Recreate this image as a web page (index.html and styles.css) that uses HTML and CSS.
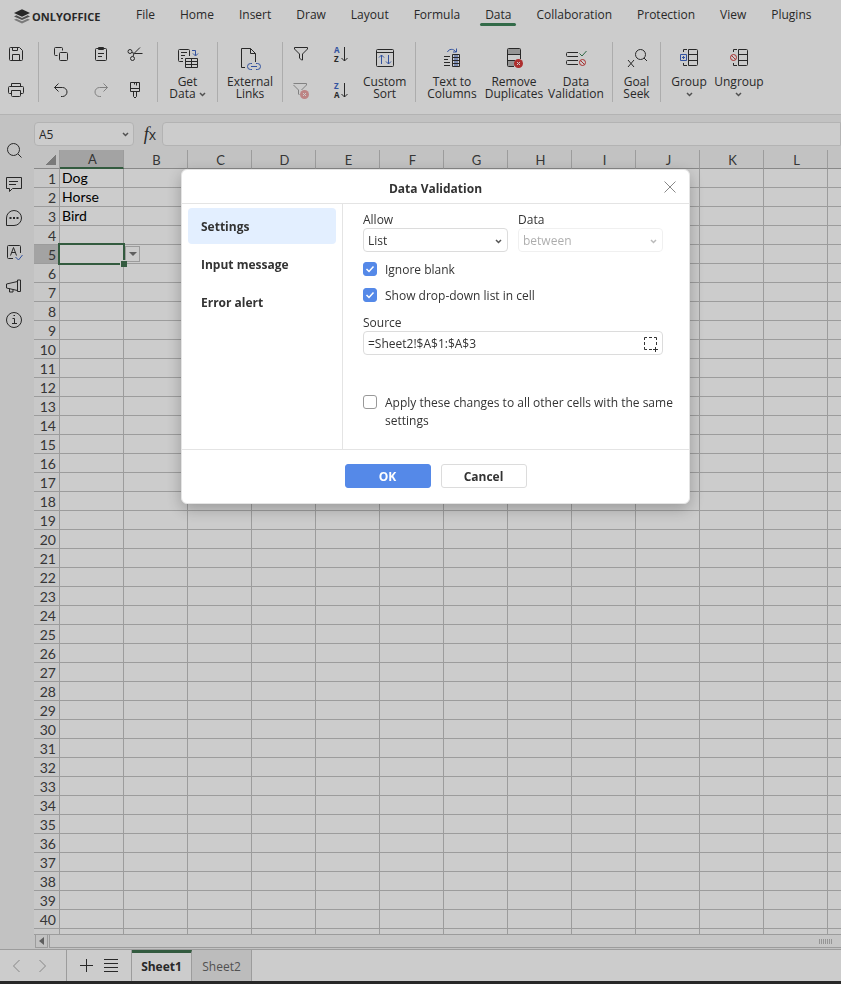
FILE: index.html
```html
<!DOCTYPE html>
<html lang="en">
<head>
    <meta charset="utf-8">
    <title>Spreadsheet Editor</title>
    <link rel="stylesheet" href="styles.css">
</head>
<body>
<div class="app">
    <header class="tabs-row">
        <a href="#" class="logo">
            <svg width="16" height="15" viewBox="0 0 16 15"><path d="M0 4 8 0.3 16 4 8 7.7z" fill="#333" stroke="none"/><path d="M0 7.4 2.4 6.3 8 8.9l5.6-2.6L16 7.4l-8 3.7z" fill="#666" stroke="none"/><path d="M0 10.8 2.4 9.7 8 12.3l5.6-2.6 2.4 1.1-8 3.7z" fill="#999" stroke="none"/></svg>
            ONLYOFFICE
        </a>
        <nav class="tabs">
            <a href="#">File</a>
            <a href="#">Home</a>
            <a href="#">Insert</a>
            <a href="#">Draw</a>
            <a href="#">Layout</a>
            <a href="#">Formula</a>
            <a href="#" class="active">Data</a>
            <a href="#">Collaboration</a>
            <a href="#">Protection</a>
            <a href="#">View</a>
            <a href="#">Plugins</a>
        </nav>
    </header>

    <div class="toolbar">
        <div class="group group-file">
            <button class="tool" aria-label="Save"><svg width="20" height="20" viewBox="0 0 20 20"><path d="M3.5 4.5a1 1 0 0 1 1-1h9l3 3v9a1 1 0 0 1-1 1h-11a1 1 0 0 1-1-1zM6.5 3.5v3h5v-3M6.500 16.500v-6h7v6"/></svg></button>
            <button class="tool" aria-label="Print"><svg width="20" height="20" viewBox="0 0 20 20"><path d="M5.500 6.500v-3h9v3M5.500 13.500h-2a1 1 0 0 1-1-1v-5a1 1 0 0 1 1-1h13a1 1 0 0 1 1 1v5a1 1 0 0 1-1 1h-2M5.500 10.500h9v5a1 1 0 0 1-1 1h-7a1 1 0 0 1-1-1z"/></svg></button>
        </div>
        <div class="group group-edit">
            <button class="tool" aria-label="Copy"><svg width="20" height="20" viewBox="0 0 20 20"><path d="M6.500 11.500h-2a1 1 0 0 1-1-1v-6a1 1 0 0 1 1-1h6a1 1 0 0 1 1 1v2"/><rect x="8.500" y="8.500" width="8" height="8" rx="1"/></svg></button>
            <button class="tool" aria-label="Paste"><svg width="20" height="20" viewBox="0 0 20 20"><rect x="4.500" y="4.500" width="11" height="12" rx="1"/><path d="M7.500 3.500h5v2h-5zM7 9.500h6M7 12.500h4"/></svg></button>
            <button class="tool" aria-label="Cut"><svg width="20" height="20" viewBox="0 0 20 20"><circle cx="5" cy="7.500" r="2"/><circle cx="7.500" cy="14.500" r="2"/><path d="M7 8.500l2.500 1h8M8 12.500l1-3 6-6"/></svg></button>
            <button class="tool" aria-label="Undo"><svg width="20" height="20" viewBox="0 0 20 20"><path d="M7.500 3.500l-4 4 4 4M3.500 7.500h8a4.500 4.500 0 0 1 0 9h-1.500"/></svg></button>
            <button class="tool" aria-label="Redo" disabled><svg width="20" height="20" viewBox="0 0 20 20"><path d="M12.500 3.500l4 4-4 4M16.500 7.500h-8a4.500 4.500 0 0 0 0 9h1.500"/></svg></button>
            <button class="tool" aria-label="Copy style"><svg width="20" height="20" viewBox="0 0 20 20"><path d="M5.500 2.500h9v9h-9zM5.500 8.500h9M11.500 2.500v3M9.500 2.500v2M8.500 11.500v5l1.500 1.500 1.500-1.500v-5"/></svg></button>
        </div>
        <div class="group group-get">
            <button class="big">
                <svg width="28" height="28" viewBox="0 0 28 28"><path d="M9 17.500H5.500a1 1 0 0 1-1-1v-10a1 1 0 0 1 1-1h9a1 1 0 0 1 1 1V12M7 8.500h6M7 11.500h4M7 14.500h2M11.500 14.500h12v9h-12zM11.500 17.500h12M11.500 20.500h12M17.500 14.500v9"/><path class="blue" d="M18 6.500h3.500v5M19 9.500l2.500 2.500 2.500-2.500"/></svg>
                <span>Get<br>Data <svg class="chev" width="7" height="5" viewBox="0 0 7 5"><path d="M1 1l2.500 2.500L6 1"/></svg></span>
            </button>
        </div>
        <div class="group group-links">
            <button class="big">
                <svg width="28" height="28" viewBox="0 0 28 28"><path d="M9 23.500H5.500v-19h9l5 5V18M14.500 4.500v5h5"/><path class="blue" d="M16 25.500h-1.500a3 3 0 0 1 0-6H16M20 19.500h1.500a3 3 0 0 1 0 6H20M15 22.500h6"/></svg>
                <span>External<br>Links</span>
            </button>
        </div>
        <div class="group group-sort">
            <div class="sort-tools">
                <button class="tool" aria-label="Filter"><svg width="20" height="20" viewBox="0 0 20 20"><path d="M3.500 3.500h13v1.500l-5 5v6h-1l-2-2v-4l-5-5z"/></svg></button>
                <button class="tool" aria-label="Sort ascending"><svg width="20" height="20" viewBox="0 0 20 20"><text class="blue-text" x="3" y="9">A</text><text x="3" y="18">Z</text><path d="M13.500 3v14M10.500 14l3 3 3-3"/></svg></button>
                <button class="tool" aria-label="Clear filter" disabled><svg width="20" height="20" viewBox="0 0 20 20"><path d="M2.500 3.500h13v1.500l-5 5M2.500 5l5 5v4l1 1"/><circle class="red-fill" cx="13.500" cy="14.500" r="4.500"/><path class="white" d="M12 13l3 3M15 13l-3 3"/></svg></button>
                <button class="tool" aria-label="Sort descending"><svg width="20" height="20" viewBox="0 0 20 20"><text class="blue-text" x="3" y="9">Z</text><text x="3" y="18">A</text><path d="M13.500 3v14M10.500 14l3 3 3-3"/></svg></button>
            </div>
            <button class="big">
                <svg width="28" height="28" viewBox="0 0 28 28"><rect x="5.500" y="5.500" width="17" height="17" rx="1"/><path d="M5.500 8.500h17"/><path class="blue" d="M10.500 20v-9M8 13.500l2.500-2.500 2.500 2.500M17.500 11v9M15 17.500l2.500 2.500 2.500-2.500"/></svg>
                <span>Custom<br>Sort</span>
            </button>
        </div>
        <div class="group group-data">
            <button class="big">
                <svg width="28" height="28" viewBox="0 0 28 28"><path d="M6 12.500h6M6 15.500h4M6 18.500h6M6 21.500h6M14.500 10.500h7v12h-7zM14.500 13.500h7M14.500 16.500h7M14.500 19.500h7"/><path class="blue" d="M9.500 8c1-3 6-4 8.500 0M18.500 4.500v3.500H15M16 12h4M16 15h4M16 18h4M16 21h4"/></svg>
                <span>Text to<br>Columns</span>
            </button>
            <button class="big">
                <svg width="28" height="28" viewBox="0 0 28 28"><path fill="#bbb" stroke="none" d="M8 5h12v5H8zM8 17h12v5H8z"/><path d="M14 22.500H8.500a1 1 0 0 1-1-1v-16a1 1 0 0 1 1-1h11a1 1 0 0 1 1 1V15M7.500 10.500h13M7.500 16.500H15"/><circle class="red-fill" cx="18.500" cy="19.500" r="4.500"/><path class="white" d="M17 18l3 3M20 18l-3 3"/></svg>
                <span>Remove<br>Duplicates</span>
            </button>
            <button class="big">
                <svg width="28" height="28" viewBox="0 0 28 28"><path d="M16 8.500H5.500a1 1 0 0 0-1 1v2a1 1 0 0 0 1 1H16M16 16.500H5.500a1 1 0 0 0-1 1v2a1 1 0 0 0 1 1H16"/><path class="green" d="M17.500 9.500l2.500 2.500 4.500-5"/><circle class="red" cx="20.500" cy="18.500" r="3"/><path class="red" d="M18.500 16.500l4 4"/></svg>
                <span>Data<br>Validation</span>
            </button>
        </div>
        <div class="group group-seek">
            <button class="big">
                <svg width="28" height="28" viewBox="0 0 28 28"><circle cx="17.500" cy="10.500" r="5"/><path d="M21 14l3 3M5 16l6 7M11 16l-6 7"/></svg>
                <span>Goal<br>Seek</span>
            </button>
        </div>
        <div class="group group-outline">
            <button class="big">
                <svg width="28" height="28" viewBox="0 0 28 28"><path d="M12 5.500H8.500V8M8.500 19v2.500H12M13.500 5.500h8a1 1 0 0 1 1 1v14a1 1 0 0 1-1 1h-8zM13.500 10.500h9M13.500 16.500h9"/><path class="blue" d="M5.500 10.500h6v6h-6zM7 13.500h3M8.500 12v3"/></svg>
                <span>Group<br><svg class="chev" width="7" height="5" viewBox="0 0 7 5"><path d="M1 1l2.500 2.500L6 1"/></svg></span>
            </button>
            <button class="big">
                <svg width="28" height="28" viewBox="0 0 28 28"><path d="M12 5.500H8.500V8M8.500 19v2.500H12M13.500 5.500h8a1 1 0 0 1 1 1v14a1 1 0 0 1-1 1h-8zM13.500 10.500h9M13.500 16.500h9"/><circle class="red" cx="8.500" cy="13.500" r="3"/><path class="red" d="M6.500 11.500l4 4"/></svg>
                <span>Ungroup<br><svg class="chev" width="7" height="5" viewBox="0 0 7 5"><path d="M1 1l2.500 2.500L6 1"/></svg></span>
            </button>
        </div>
    </div>

    <div class="workspace">
        <aside class="sidebar">
            <button class="tool" aria-label="Find"><svg width="20" height="20" viewBox="0 0 20 20"><circle cx="9.500" cy="9.500" r="6"/><path d="M14 14l3.500 3.500"/></svg></button>
            <button class="tool" aria-label="Comments"><svg width="20" height="20" viewBox="0 0 20 20"><path d="M2.500 3.500h15v11h-9l-3 3v-3h-3zM5 7.500h9M5 10.500h7"/></svg></button>
            <button class="tool" aria-label="Chat"><svg width="20" height="20" viewBox="0 0 20 20"><path d="M2.500 17.500V10a7.500 7.500 0 1 1 7.500 7.500z"/><path d="M5.500 10h2M9 10h2M12.500 10h2" stroke-width="2"/></svg></button>
            <button class="tool" aria-label="Spell checking"><svg width="20" height="20" viewBox="0 0 20 20"><path d="M9 16.500H4.500a1 1 0 0 1-1-1v-11a1 1 0 0 1 1-1h11a1 1 0 0 1 1 1V11M6.500 13.500l3-8 3 8M7.500 10.500h4"/><path class="blue" d="M11.500 15l3 3 4-5"/></svg></button>
            <button class="tool" aria-label="Feedback"><svg width="20" height="20" viewBox="0 0 20 20"><path d="M13.500 5.500l-11 2.500v4l11 2.500zM13.500 4h3v11.500h-3zM5.500 12.500v3.500h3.500v-2.500"/></svg></button>
            <button class="tool" aria-label="About"><svg width="20" height="20" viewBox="0 0 20 20"><circle cx="10" cy="10" r="7.500"/><path d="M8.500 8.500h2v5M8 13.500h5M9.500 5.500h1.500"/></svg></button>
        </aside>

        <main class="sheet">
            <div class="formula-bar">
                <div class="name-box">
                    <input type="text" value="A5" aria-label="Cell name">
                    <svg class="chev" width="7" height="5" viewBox="0 0 7 5"><path d="M1 1l2.500 2.500L6 1"/></svg>
                </div>
                <button class="fx" aria-label="Insert function"><i>f</i>x</button>
                <input type="text" class="formula-input" aria-label="Formula">
            </div>
            <div class="grid-wrap">
                <table class="grid">
                    <thead><tr id="grid-head"></tr></thead>
                    <tbody id="grid-body"></tbody>
                </table>
            </div>
            <div class="scrollbar">
                <button class="scroll-arrow" aria-label="Scroll left"><svg width="5" height="8" viewBox="0 0 5 8"><path d="M5 0v8L0 4z"/></svg></button>
                <div class="scroll-thumb"><span class="grip"></span></div>
            </div>
        </main>
    </div>

    <footer class="statusbar">
        <div class="sheet-nav">
            <button aria-label="Previous sheet"><svg width="9" height="14" viewBox="0 0 9 14"><path d="M7.500 1l-6 6 6 6"/></svg></button>
            <button aria-label="Next sheet"><svg width="9" height="14" viewBox="0 0 9 14"><path d="M1.500 1l6 6-6 6"/></svg></button>
        </div>
        <div class="sheet-actions">
            <button aria-label="Add sheet"><svg width="14" height="14" viewBox="0 0 14 14"><path d="M6.500 0v13M0 6.500h13"/></svg></button>
            <button aria-label="List of sheets"><svg width="14" height="14" viewBox="0 0 14 14"><path d="M0 0.500h14M0 4.500h14M0 8.500h14M0 12.500h14"/></svg></button>
        </div>
        <button class="sheet-tab active">Sheet1</button>
        <button class="sheet-tab">Sheet2</button>
    </footer>
</div>

<div class="mask">
    <div class="dialog" role="dialog" aria-labelledby="dialog-title">
        <div class="dialog-header">
            <h1 id="dialog-title">Data Validation</h1>
            <button class="close" aria-label="Close"><svg width="12" height="12" viewBox="0 0 12 12"><path d="M0.500 0.500l11 11M11.500 0.500l-11 11"/></svg></button>
        </div>
        <div class="dialog-body">
            <div class="dialog-menu">
                <button class="active">Settings</button>
                <button>Input message</button>
                <button>Error alert</button>
            </div>
            <form class="settings">
                <div class="combos">
                    <div class="field">
                        <label for="allow">Allow</label>
                        <select id="allow"><option>List</option></select>
                    </div>
                    <div class="field">
                        <label for="data">Data</label>
                        <select id="data" disabled><option>between</option></select>
                    </div>
                </div>
                <label class="check"><input type="checkbox" checked>Ignore blank</label>
                <label class="check"><input type="checkbox" checked>Show drop-down list in cell</label>
                <div class="field source">
                    <label for="source">Source</label>
                    <div class="source-box">
                        <input type="text" id="source" value="=Sheet2!$A$1:$A$3">
                        <button type="button" aria-label="Select data"><svg width="16" height="16" viewBox="0 0 16 16"><path d="M2.500 4V1.500H5M7 1.500h3M12 1.500h2.500V4M2.500 6v3M14.500 6v3M2.500 11v2.500H5M7 13.500h3M13.500 11v5M11 13.500h5"/></svg></button>
                    </div>
                </div>
                <label class="check apply"><input type="checkbox">Apply these changes to all other cells with the same settings</label>
            </form>
        </div>
        <div class="dialog-footer">
            <button class="primary">OK</button>
            <button>Cancel</button>
        </div>
    </div>
</div>

<script src="script.js"></script>
</body>
</html>
```
FILE: styles.css
```css
* {
    box-sizing: border-box;
}

body {
    margin: 0;
    font-family: "Open Sans", "Noto Sans", sans-serif;
    font-size: 12px;
    color: #333;
    background-color: #333;
}

button, input, select {
    font: inherit;
    color: inherit;
    margin: 0;
    padding: 0;
    border: none;
    background: none;
}

a {
    color: inherit;
    text-decoration: none;
}

svg {
    display: block;
    flex: none;
    fill: none;
    stroke: #333;
}

svg text {
    font: bold 8px "Open Sans", sans-serif;
    fill: #333;
    stroke: none;
}

svg .blue { stroke: #4068c8; }
svg .blue-text { fill: #4068c8; }
svg .green { stroke: #3a8056; }
svg .red { stroke: #d43b3b; }
svg .red-fill { fill: #d93a3a; stroke: none; }
svg .white { stroke: #fff; }

.app {
    display: flex;
    flex-direction: column;
    height: 100vh;
    border-bottom: 3px solid #333;
    background-color: #fff;
}

/* Tabs */
.tabs-row {
    display: flex;
    align-items: center;
    height: 32px;
    padding-left: 14px;
}

.logo {
    display: flex;
    align-items: center;
    gap: 2px;
    width: 111px;
    font-size: 11px;
    font-weight: bold;
}

.tabs {
    display: flex;
    gap: 3px;
}

.tabs a {
    padding: 5px 11px 0;
    height: 28px;
    line-height: 16px;
}

.tabs .active {
    position: relative;
}

.tabs .active::after {
    content: "";
    position: absolute;
    left: 6px;
    right: 6px;
    bottom: 4px;
    height: 3px;
    border-radius: 2px;
    background-color: #40865c;
}

/* Toolbar */
.toolbar {
    display: flex;
    align-items: flex-start;
    height: 83px;
    padding-top: 10px;
    border-bottom: 1px solid #e0e0e0;
}

.group {
    display: flex;
    justify-content: center;
    height: 60px;
    flex: none;
    border-right: 1px solid #d8d8d8;
}

.tool {
    display: flex;
    align-items: center;
    justify-content: center;
    width: 20px;
    height: 20px;
}

.tool:disabled {
    opacity: 0.45;
}

.group-file {
    flex-direction: column;
    gap: 16px;
    width: 39px;
    padding-left: 6px;
    justify-content: flex-start;
    padding-top: 2px;
}

.group-edit {
    display: grid;
    grid-template-columns: 20px 26px 20px;
    align-content: start;
    justify-content: start;
    justify-items: end;
    gap: 16px 14px;
    width: 119px;
    padding: 2px 0 0 12px;
}

.group-get { width: 60px; }
.group-links { width: 65px; }

.group-sort {
    justify-content: flex-start;
    gap: 12px;
    width: 133px;
    padding-left: 8px;
}

.sort-tools {
    display: grid;
    grid-template-columns: 20px 20px;
    align-content: start;
    gap: 16px 20px;
    padding-top: 2px;
}

.group-data { width: 197px; }
.group-seek { width: 48px; }

.group-outline {
    padding-left: 3px;
    border-right: none;
}

.big {
    display: flex;
    flex-direction: column;
    align-items: center;
    gap: 4px;
    padding-top: 2px;
    line-height: 12px;
    text-align: center;
    white-space: nowrap;
}

.group-data .big { width: 62px; }
.group-outline .big { width: 50px; }

.chev {
    display: inline-block;
    vertical-align: middle;
    stroke: #666;
    stroke-width: 1.5;
}

/* Workspace */
.workspace {
    display: flex;
    flex: 1;
    min-height: 0;
    background-color: #f3f3f3;
}

.sidebar {
    display: flex;
    flex-direction: column;
    gap: 14px;
    width: 34px;
    padding: 25px 4px;
}

.sheet {
    display: flex;
    flex-direction: column;
    flex: 1;
    min-width: 0;
}

.formula-bar {
    display: flex;
    align-items: center;
    height: 35px;
    padding-top: 3px;
}

.name-box {
    display: flex;
    align-items: center;
    width: 100px;
    height: 24px;
    padding: 0 4px;
    border: 1px solid #e0e0e0;
    border-radius: 4px;
    background-color: #fff;
}

.name-box input {
    flex: 1;
    min-width: 0;
}

.fx {
    width: 28px;
    padding-left: 4px;
    font-size: 14px;
    line-height: 20px;
}

.fx i {
    font-family: "Liberation Serif", serif;
    font-size: 18px;
}

.formula-input {
    flex: 1;
    height: 24px;
    border: 1px solid #e0e0e0;
    border-radius: 4px 0 0 4px;
    background-color: #fff;
}

.grid-wrap {
    flex: 1;
    min-height: 0;
    overflow: hidden;
    border-bottom: 1px solid #c4c4c4;
    background-color: #fff;
}

.grid {
    border-spacing: 0;
    font-family: Lato, sans-serif;
    font-size: 14px;
    line-height: 16px;
}

.grid th,
.grid td {
    height: 19px;
    min-width: 64px;
    padding: 0 2px;
    border-right: 1px solid #c4c4c4;
    border-bottom: 1px solid #c4c4c4;
    white-space: nowrap;
}

.grid td {
    color: #000;
}

.grid th {
    font-weight: normal;
    color: #444;
    background-color: #f3f3f3;
}

.grid th:first-child {
    min-width: 26px;
}

.grid tbody th {
    padding: 1px 3px 0 0;
    text-align: right;
    background-color: #fafafa;
}

.grid thead th {
    padding: 1px 0 0 2px;
    font-size: 13px;
    border-bottom-color: #aaa;
}

.grid .corner {
    padding: 0 3px;
}

.corner span {
    display: block;
    width: 11px;
    height: 11px;
    margin-left: auto;
    background: linear-gradient(135deg, transparent 50%, #999 50%);
}

.grid .current {
    background-color: #ccc;
}

.grid thead .current {
    border-bottom: 2px solid #40724f;
}

.grid .selected {
    position: relative;
}

.selected::before {
    content: "";
    position: absolute;
    inset: -2px;
    border: 2px solid #40724f;
}

.selected::after {
    content: "";
    position: absolute;
    right: -4px;
    bottom: -4px;
    width: 6px;
    height: 6px;
    border: 1px solid #fff;
    border-width: 1px 0 0 1px;
    background-color: #40724f;
}

.cell-drop {
    display: flex;
    align-items: center;
    justify-content: center;
    position: absolute;
    left: 65px;
    top: 1px;
    width: 15px;
    height: 16px;
    border: 1px solid #c4c4c4;
    background-color: #fff;
}

.cell-drop svg,
.scroll-arrow svg {
    fill: #777;
    stroke: none;
}

/* Scrollbar */
.scrollbar {
    display: flex;
    gap: 1px;
    height: 13px;
    padding-left: 1px;
    margin-bottom: 1px;
}

.scroll-arrow {
    display: flex;
    align-items: center;
    justify-content: center;
    width: 13px;
    border: 1px solid #c4c4c4;
    border-top: none;
}

.scroll-thumb {
    display: flex;
    align-items: center;
    justify-content: flex-end;
    flex: 1;
    padding-right: 8px;
    border: 1px solid #c4c4c4;
    border-width: 0 0 1px 1px;
    background-color: #f8f8f8;
}

.grip {
    width: 14px;
    height: 5px;
    background: repeating-linear-gradient(90deg, #bbb 0 1px, transparent 1px 2px);
}

/* Status bar */
.statusbar {
    display: flex;
    height: 32px;
    border-top: 1px solid #c4c4c4;
}

.sheet-nav,
.sheet-actions {
    display: flex;
    align-items: center;
    justify-content: center;
    border-right: 1px solid #c4c4c4;
}

.sheet-nav {
    width: 67px;
    gap: 17px;
    padding-right: 7px;
}

.sheet-nav svg {
    stroke: #aaa;
}

.sheet-actions {
    width: 65px;
    gap: 10px;
}

.sheet-tab {
    width: 60px;
    padding-top: 2px;
    border-right: 1px solid #c4c4c4;
    background-color: #ececec;
    color: #666;
}

.sheet-tab.active {
    padding: 0 0 2px;
    border-top: 3px solid #40724f;
    background-color: #fff;
    color: #333;
    font-weight: bold;
}

/* Dialog */
.mask {
    position: fixed;
    inset: 0;
    padding: 169px 0 0 181px;
    background-color: rgba(0, 0, 0, 0.2);
}

.dialog {
    width: 509px;
    border: 1px solid #e4e4e4;
    border-radius: 6px;
    background-color: #fff;
    box-shadow: 0 5px 16px rgba(0, 0, 0, 0.25);
    overflow: hidden;
}

.dialog-header {
    position: relative;
    height: 34px;
    border-bottom: 1px solid #e4e4e4;
}

.dialog-header h1 {
    margin: 0;
    padding-top: 2px;
    font-size: 12px;
    line-height: 34px;
    text-align: center;
}

.close {
    position: absolute;
    right: 13px;
    top: 11px;
}

.close svg {
    stroke: #888;
}

.dialog-body {
    display: flex;
    height: 246px;
    border-bottom: 1px solid #e4e4e4;
}

.dialog-menu {
    display: flex;
    flex-direction: column;
    gap: 2px;
    width: 161px;
    padding: 4px 6px;
    border-right: 1px solid #e4e4e4;
}

.dialog-menu button {
    height: 36px;
    padding: 1px 0 0 13px;
    border-radius: 4px;
    font-weight: bold;
    text-align: left;
}

.dialog-menu .active {
    background-color: #e3efff;
}

.settings {
    flex: 1;
    padding: 8px 26px 0 20px;
}

.combos {
    display: grid;
    grid-template-columns: 1fr 1fr;
    gap: 10px;
}

.field {
    display: flex;
    flex-direction: column;
    line-height: 16px;
}

select,
.source-box {
    height: 24px;
    padding: 1px 4px 0;
    border: 1px solid #dcdcdc;
    border-radius: 4px;
    background-color: #fff;
}

select {
    appearance: none;
    background: url("data:image/svg+xml,%3Csvg xmlns='http://www.w3.org/2000/svg' width='7' height='5'%3E%3Cpath d='M1 1l2.500 2.500L6 1' fill='none' stroke='%23555' stroke-width='1.500'/%3E%3C/svg%3E") no-repeat right 5px top 10px;
}

select:disabled {
    opacity: 0.4;
}

.check {
    display: flex;
    align-items: flex-start;
    gap: 8px;
    margin-top: 8px;
    line-height: 18px;
}

.combos + .check {
    margin-top: 9px;
}

.check input {
    appearance: none;
    flex: none;
    width: 14px;
    height: 14px;
    margin-top: 1px;
    border: 1px solid #999;
    border-radius: 3px;
}

.check input:checked {
    border-color: #5589e8;
    background: #5589e8 url("data:image/svg+xml,%3Csvg xmlns='http://www.w3.org/2000/svg' width='10' height='8'%3E%3Cpath d='M1.500 4l2.500 2.500 4.500-5' fill='none' stroke='white' stroke-width='1.500'/%3E%3C/svg%3E") no-repeat center;
}

.source {
    margin-top: 10px;
}

.source-box {
    display: flex;
    align-items: center;
}

.source-box input {
    flex: 1;
}

.apply {
    margin-top: 39px;
    margin-right: -20px;
}

.dialog-footer {
    display: flex;
    justify-content: center;
    gap: 10px;
    padding: 14px 0 15px;
}

.dialog-footer button {
    width: 86px;
    height: 24px;
    border: 1px solid #dcdcdc;
    border-radius: 3px;
    font-weight: bold;
}

.dialog-footer .primary {
    border-color: #5589e8;
    background-color: #5589e8;
    color: #fff;
}
```
FILE: script.js
```js
const columns = 'ABCDEFGHIJKLM'.split('');
const values = ['Dog', 'Horse', 'Bird'];
const head = document.getElementById('grid-head');
const body = document.getElementById('grid-body');

head.innerHTML = '<th class="corner"><span></span></th>' +
    columns.map(c => `<th${c === 'A' ? ' class="current"' : ''}>${c}</th>`).join('');

for (let row = 1; row <= 41; row++) {
    const tr = document.createElement('tr');
    tr.innerHTML = `<th${row === 5 ? ' class="current"' : ''}>${row}</th>` +
        columns.map(() => '<td></td>').join('');
    if (values[row - 1]) {
        tr.children[1].textContent = values[row - 1];
    }
    if (row === 5) {
        tr.children[1].className = 'selected';
        tr.children[1].innerHTML = '<button class="cell-drop" aria-label="Open list"><svg width="8" height="4" viewBox="0 0 8 4"><path d="M0 0h8L4 4z"/></svg></button>';
    }
    body.appendChild(tr);
}
```
